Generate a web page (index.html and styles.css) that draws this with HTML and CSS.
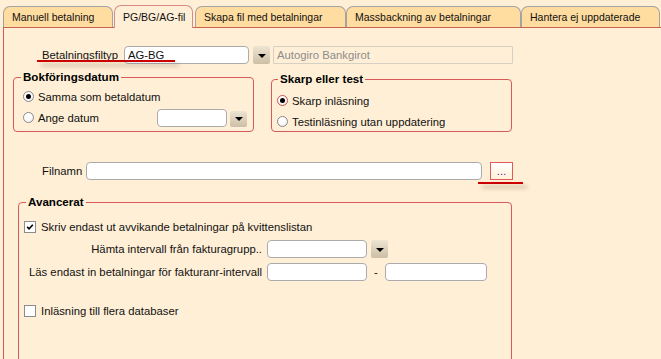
FILE: index.html
```html
<!DOCTYPE html>
<html lang="sv">
<head>
<meta charset="utf-8">
<title>PG/BG/AG-fil</title>
<link rel="stylesheet" href="styles.css">
</head>
<body>
<div class="tabs">
  <div class="tab t1">Manuell betalning</div>
  <div class="tab t2 active">PG/BG/AG-fil</div>
  <div class="tab t3">Skapa fil med betalningar</div>
  <div class="tab t4">Massbackning av betalningar</div>
  <div class="tab t5">Hantera ej uppdaterade</div>
</div>
<div class="panel">
  <div class="row typ">
    <span class="lbl typ-lbl">Betalningsfiltyp</span>
    <div class="input sel">AG-BG</div>
    <div class="ddbtn"></div>
    <div class="input disabled">Autogiro Bankgirot</div>
    <div class="mark mark-typ"></div>
  </div>

  <div class="groups">
    <fieldset class="grp g1">
      <legend>Bokföringsdatum</legend>
      <div class="opt"><span class="radio on"></span><span>Samma som betaldatum</span></div>
      <div class="opt"><span class="radio"></span><span class="grow">Ange datum</span><div class="input date"></div><div class="ddbtn small"></div></div>
    </fieldset>
    <fieldset class="grp g2">
      <legend>Skarp eller test</legend>
      <div class="opt"><span class="radio on focus"></span><span>Skarp inläsning</span></div>
      <div class="opt"><span class="radio"></span><span>Testinläsning utan uppdatering</span></div>
    </fieldset>
  </div>

  <div class="row file">
    <span class="lbl file-lbl">Filnamn</span>
    <div class="input fname"></div>
    <div class="dots">...</div>
    <div class="mark mark-file"></div>
  </div>

  <fieldset class="grp adv">
    <legend>Avancerat</legend>
    <div class="chkrow first">
      <span class="chk on"><svg width="12" height="12" viewBox="0 0 12 12"><path d="M2.6 5.8 L4.9 8.2 L9.4 3.2" fill="none" stroke="#000" stroke-width="1.9"/></svg></span>
      <span>Skriv endast ut avvikande betalningar på kvittenslistan</span>
    </div>
    <div class="frow">
      <span class="flbl">Hämta intervall från fakturagrupp..</span>
      <div class="input num"></div>
      <div class="ddbtn"></div>
    </div>
    <div class="frow second">
      <span class="flbl">Läs endast in betalningar för fakturanr-intervall</span>
      <div class="input num"></div>
      <span class="dash">-</span>
      <div class="input num2"></div>
    </div>
    <div class="chkrow last">
      <span class="chk"></span>
      <span>Inläsning till flera databaser</span>
    </div>
  </fieldset>
</div>
</body>
</html>
```

FILE: styles.css
```css
html, body {
  margin: 0;
  padding: 0;
  height: 100%;
  overflow: hidden;
}
body {
  background: #FFEFD6;
  font-family: "Liberation Sans", Arial, sans-serif;
  font-size: 11.3px;
  color: #111;
}

/* ---------- tabs ---------- */
.tabs {
  display: flex;
  align-items: flex-end;
  height: 27px;
}
.tab {
  box-sizing: border-box;
  height: 21px;
  padding: 0 8px;
  border: 1px solid #A3A3A3;
  border-bottom: none;
  border-radius: 7px 7px 0 0;
  background: #FFDCA0;
  font-size: 10.5px;
  line-height: 20px;
  color: #111;
  white-space: nowrap;
}
.t1 { margin-left: 3px; width: 110px; }
.t2 { margin-left: 1px; width: 79px; }
.t3 { margin-left: 2px; width: 151px; }
.t4 { width: 175px; }
.t5 { width: 139px; }
.tab.active {
  position: relative;
  z-index: 1;
  height: 23px;
  margin-bottom: -1px;
  background: #FFEFD6;
  border-color: #D98A86;
  line-height: 22px;
}

/* ---------- panel ---------- */
.panel {
  margin-left: 3px;
  height: calc(100vh - 28px);
  overflow: hidden;
  border-top: 1px solid #C9654E;
  border-left: 1px solid #D45858;
}

.row {
  position: relative;
  display: flex;
  align-items: center;
  height: 18px;
}
.typ { margin-top: 18px; padding-left: 38px; }
.typ-lbl { width: 82px; }
.file { margin-top: 30px; padding-left: 38px; }
.file-lbl { width: 44px; }

.input {
  box-sizing: border-box;
  height: 18px;
  border: 1px solid #ABABAB;
  border-radius: 4px;
  background: #fff;
  padding-left: 3px;
  line-height: 16px;
  white-space: nowrap;
  overflow: hidden;
}
.sel { width: 125px; }
.disabled {
  width: 240px;
  margin-left: 3px;
  background: transparent;
  border-color: #D6CFC3;
  border-radius: 1px;
  color: #8D8D8D;
}
.fname { width: 396px; }
.date { width: 70px; margin-left: auto; }
.num { width: 100px; }
.num2 { width: 102px; }

.ddbtn {
  box-sizing: border-box;
  width: 17px;
  height: 18px;
  margin-left: 4px;
  border-radius: 2px;
  background: linear-gradient(#EDE4D3, #CDBFA6);
  display: flex;
  align-items: center;
  justify-content: center;
}
.ddbtn::after {
  content: "";
  width: 0;
  height: 0;
  border-left: 4px solid transparent;
  border-right: 4px solid transparent;
  border-top: 4px solid #000;
  margin-top: 1px;
}
.ddbtn.small {
  height: 16px;
  margin-left: 3px;
  margin-top: 2px;
}

.dots {
  box-sizing: border-box;
  width: 23px;
  height: 18px;
  margin-left: 8px;
  border: 1px solid #E05A5A;
  background: linear-gradient(#FFFFFF, #FFF2D8);
  color: #5E1B9C;
  text-align: center;
  line-height: 17px;
}

/* red annotation underlines */
.mark {
  position: absolute;
  height: 2px;
  background: #CC0000;
  box-shadow: 4px 4px 4px rgba(80, 60, 40, 0.35);
}
.mark-typ { left: 33px; top: 14px; width: 138px; }
.mark-file { left: 474px; top: 20px; width: 45px; }

/* ---------- group boxes ---------- */
.groups {
  display: flex;
  align-items: flex-start;
  margin-top: 6px;
}
.grp {
  box-sizing: border-box;
  margin: 0;
  min-width: 0;
  border: 1px solid #D55B5B;
  border-radius: 4px;
}
.grp legend {
  font-weight: bold;
  font-size: 11.6px;
  line-height: 14px;
  padding: 0 2px;
  color: #000;
}
.g1 {
  margin-left: 9px;
  width: 241px;
  height: 62px;
  padding: 2px 6px 0 9px;
}
.g1 legend { margin-left: -2px; }
.g2 {
  margin-left: 17px;
  margin-top: 2px;
  width: 241px;
  height: 60px;
  padding: 4px 6px 0 5px;
}
.g2 legend { margin-left: 1px; }

.opt {
  display: flex;
  align-items: center;
  height: 21px;
  white-space: nowrap;
}
.grow { flex: 1; }

.radio {
  box-sizing: border-box;
  position: relative;
  width: 11px;
  height: 11px;
  margin-right: 4px;
  border: 1px solid #8A8A8A;
  border-radius: 50%;
  background: radial-gradient(circle at 40% 35%, #fff 40%, #E4E4E4 100%);
  flex: none;
}
.radio.on::after {
  content: "";
  position: absolute;
  left: 2px;
  top: 2px;
  width: 5px;
  height: 5px;
  border-radius: 50%;
  background: #000;
}
.radio.focus { border-color: #C95050; }

/* ---------- Avancerat ---------- */
.adv {
  margin-top: 15px;
  margin-left: 14px;
  width: 494px;
  height: 180px;
  padding: 8px 5px 0 5px;
}
.adv legend { margin-left: 2px; }

.chkrow {
  display: flex;
  align-items: center;
  height: 20px;
  white-space: nowrap;
}
.chkrow.first { margin-bottom: 3px; }
.chkrow.last { margin-top: 20px; }
.chk {
  box-sizing: border-box;
  width: 12px;
  height: 12px;
  margin-right: 5px;
  border: 1px solid #8C8C8C;
  background: #fff;
  display: flex;
  align-items: center;
  justify-content: center;
  flex: none;
}
.chk svg { display: block; }

.frow {
  display: flex;
  align-items: center;
  height: 18px;
  white-space: nowrap;
}
.frow.second { margin-top: 5px; }
.flbl {
  width: 238px;
  margin-right: 5px;
  text-align: right;
}
.dash {
  width: 18px;
  text-align: center;
}
```
